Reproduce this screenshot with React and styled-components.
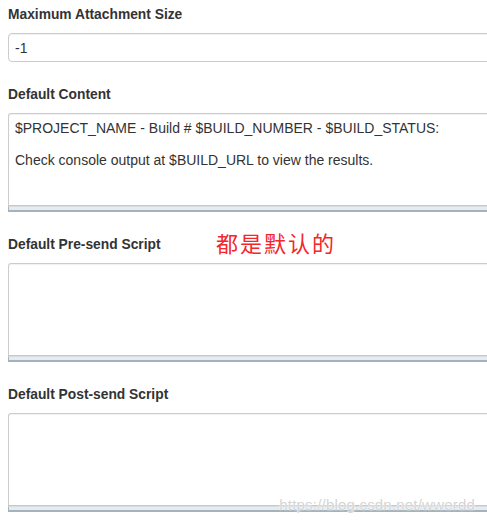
import React from "react";
import styled, { createGlobalStyle } from "styled-components";

const GlobalStyle = createGlobalStyle`
  html, body {
    margin: 0;
    padding: 0;
    background: #fff;
  }
  body {
    font-family: "Liberation Sans", Arial, sans-serif;
    color: #333;
    overflow: hidden;
  }
`;

const Page = styled.div`
  position: relative;
  width: 487px;
  height: 523px;
  overflow: hidden;
  padding: 6px 0 0 8px;
  box-sizing: border-box;
`;

const Field = styled.div`
  position: relative;
  width: 520px;
  margin-bottom: 24px;
`;

const LabelRow = styled.div`
  position: relative;
  height: 18px;
  margin-bottom: 9px;
`;

const Label = styled.div`
  font-size: 13.8px;
  line-height: 18px;
  font-weight: 700;
  color: #333;
`;

const Note = styled.span`
  position: absolute;
  left: 208px;
  top: -9px;
  font-family: "Noto Sans CJK SC", sans-serif;
  font-size: 22px;
  line-height: 30px;
  letter-spacing: 2px;
  color: #f5262a;
`;

const TextInput = styled.input`
  display: block;
  width: 100%;
  height: 29px;
  box-sizing: border-box;
  padding: 0 6px;
  border: 1px solid #ccc;
  border-radius: 4px;
  box-shadow: inset 0 1px 1px rgba(0, 0, 0, 0.06);
  font-family: "Liberation Sans", Arial, sans-serif;
  font-size: 14px;
  color: #333;
  outline: none;
`;

const Area = styled.textarea`
  display: block;
  width: 100%;
  height: 93px;
  box-sizing: border-box;
  margin: 0;
  padding: 6px;
  border: 1px solid #ccc;
  border-bottom-color: #c8c8c8;
  border-radius: 3px 0 0 0;
  box-shadow: inset 0 1px 1px rgba(0, 0, 0, 0.06);
  font-family: "Liberation Sans", Arial, sans-serif;
  font-size: 14px;
  line-height: 16px;
  color: #333;
  resize: none;
  outline: none;
  overflow: hidden;
`;

const Handle = styled.div`
  height: 6px;
  box-sizing: border-box;
  background: #e6ebee;
  border-top: 1px solid #d7dde1;
  border-left: 1px solid #a9b6be;
  border-bottom: 2px solid #a3b2bc;
`;

const Watermark = styled.span`
  position: absolute;
  right: 12px;
  bottom: 10px;
  font-family: "Liberation Sans", Arial, sans-serif;
  font-size: 15px;
  color: rgba(205, 205, 205, 0.85);
  text-shadow: 0 0 2px #fff, 0 0 1px #fff;
  letter-spacing: 0.2px;
`;

function TextField({ label, value }) {
  return (
    <Field>
      <LabelRow>
        <Label>{label}</Label>
      </LabelRow>
      <TextInput defaultValue={value} readOnly />
    </Field>
  );
}

function AreaField({ label, value, note }) {
  return (
    <Field>
      <LabelRow>
        <Label>{label}</Label>
        {note && <Note>{note}</Note>}
      </LabelRow>
      <Area defaultValue={value} readOnly />
      <Handle />
    </Field>
  );
}

const content =
  "$PROJECT_NAME - Build # $BUILD_NUMBER - $BUILD_STATUS:\n\nCheck console output at $BUILD_URL to view the results.";

export default function App() {
  return (
    <Page>
      <GlobalStyle />
      <TextField label="Maximum Attachment Size" value="-1" />
      <AreaField label="Default Content" value={content} />
      <AreaField label="Default Pre-send Script" value="" note="都是默认的" />
      <AreaField label="Default Post-send Script" value="" />
      <Watermark>https://blog.csdn.net/wwerdd</Watermark>
    </Page>
  );
}
